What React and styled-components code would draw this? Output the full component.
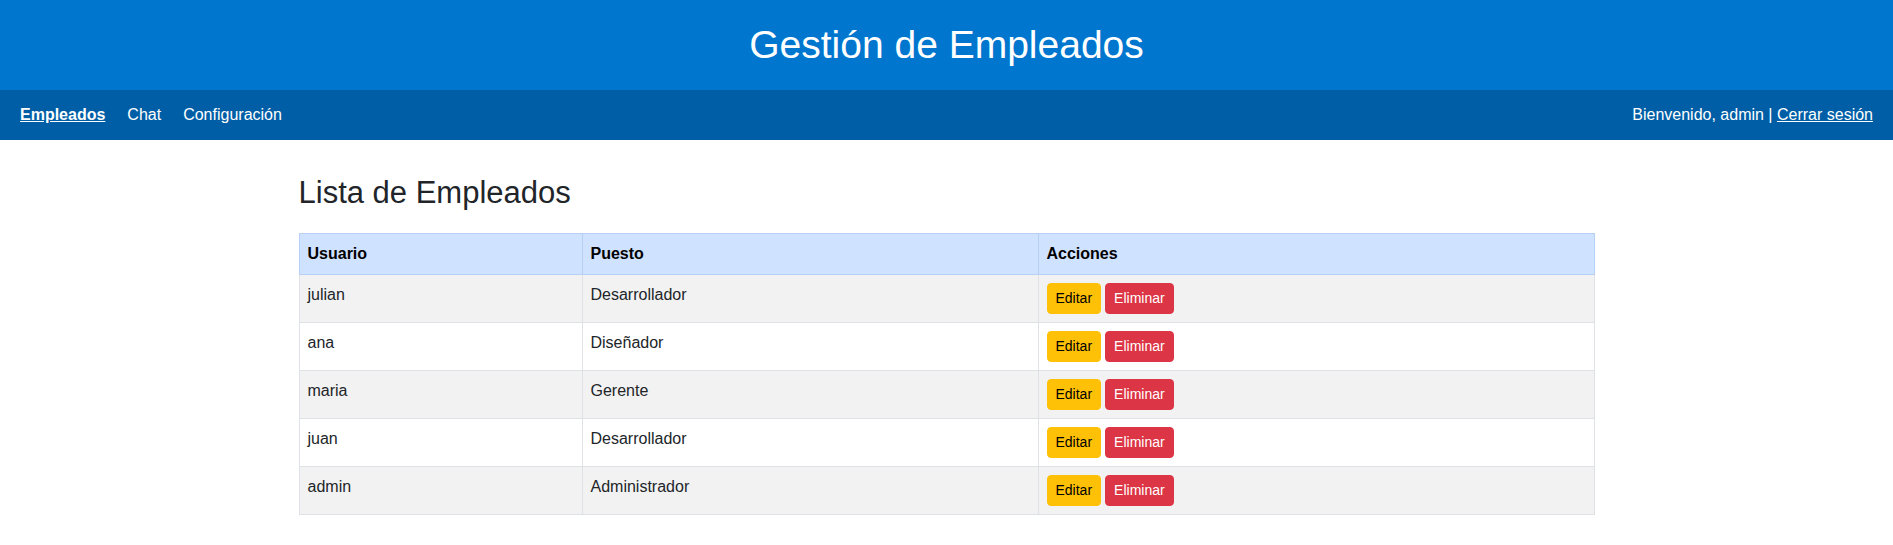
import React from "react";
import styled, { createGlobalStyle } from "styled-components";

const GlobalStyle = createGlobalStyle`
  html, body {
    margin: 0;
    padding: 0;
    background: #ffffff;
  }
  body {
    font-family: "Liberation Sans", Arial, sans-serif;
    font-size: 16px;
    color: #212529;
  }
`;

const Header = styled.header`
  background: #0076cf;
  color: #ffffff;
  height: 90px;
  display: flex;
  align-items: center;
  justify-content: center;
`;

const Title = styled.h1`
  margin: 0;
  font-size: 39px;
  font-weight: 400;
  line-height: 50px;
`;

const NavBar = styled.nav`
  background: #005ea6;
  height: 50px;
  display: flex;
  align-items: center;
  justify-content: space-between;
  padding: 0 20px;
  color: #ffffff;
`;

const NavLinks = styled.div`
  display: flex;
  gap: 22px;
`;

const NavLink = styled.a`
  color: #ffffff;
  text-decoration: ${(p) => (p.$active ? "underline" : "none")};
  font-weight: ${(p) => (p.$active ? 700 : 400)};
  cursor: pointer;
`;

const UserInfo = styled.div`
  color: #ffffff;
`;

const Logout = styled.a`
  color: #ffffff;
  text-decoration: underline;
  cursor: pointer;
`;

const Main = styled.main`
  width: 1296px;
  margin: 0 auto;
  padding-top: 35px;
`;

const PageTitle = styled.h2`
  margin: 0 0 22px;
  font-size: 31px;
  font-weight: 400;
  color: #212529;
`;

const Table = styled.table`
  width: 100%;
  border-collapse: collapse;
  table-layout: fixed;
  line-height: 1.5;
`;

const Col = styled.col`
  width: ${(p) => p.$w || "auto"};
`;

const HeadCell = styled.th`
  background: #cfe2ff;
  border: 1px solid #b6cff2;
  padding: 8px;
  text-align: left;
  font-weight: 700;
  color: #000000;
`;

const Row = styled.tr`
  background: ${(p) => (p.$striped ? "#f2f2f2" : "#ffffff")};
`;

const Cell = styled.td`
  border: 1px solid #dee2e6;
  padding: 8px;
  color: #212529;
  vertical-align: top;
`;

const Actions = styled.div`
  display: flex;
  gap: 4px;
`;

const Button = styled.button`
  font-family: "Liberation Sans", Arial, sans-serif;
  font-size: 14px;
  line-height: 1.5;
  padding: 4px 8px;
  border-radius: 4px;
  border: 1px solid ${(p) => (p.$variant === "danger" ? "#dc3545" : "#ffc107")};
  background: ${(p) => (p.$variant === "danger" ? "#dc3545" : "#ffc107")};
  color: ${(p) => (p.$variant === "danger" ? "#ffffff" : "#000000")};
  cursor: pointer;
`;

const employees = [
  { user: "julian", role: "Desarrollador" },
  { user: "ana", role: "Diseñador" },
  { user: "maria", role: "Gerente" },
  { user: "juan", role: "Desarrollador" },
  { user: "admin", role: "Administrador" },
];

export default function App() {
  return (
    <>
      <GlobalStyle />
      <Header>
        <Title>Gestión de Empleados</Title>
      </Header>
      <NavBar>
        <NavLinks>
          <NavLink $active>Empleados</NavLink>
          <NavLink>Chat</NavLink>
          <NavLink>Configuración</NavLink>
        </NavLinks>
        <UserInfo>
          Bienvenido, admin | <Logout>Cerrar sesión</Logout>
        </UserInfo>
      </NavBar>
      <Main>
        <PageTitle>Lista de Empleados</PageTitle>
        <Table>
          <colgroup>
            <Col $w="283px" />
            <Col $w="456px" />
            <Col />
          </colgroup>
          <thead>
            <tr>
              <HeadCell>Usuario</HeadCell>
              <HeadCell>Puesto</HeadCell>
              <HeadCell>Acciones</HeadCell>
            </tr>
          </thead>
          <tbody>
            {employees.map((e, i) => (
              <Row key={e.user} $striped={i % 2 === 0}>
                <Cell>{e.user}</Cell>
                <Cell>{e.role}</Cell>
                <Cell>
                  <Actions>
                    <Button>Editar</Button>
                    <Button $variant="danger">Eliminar</Button>
                  </Actions>
                </Cell>
              </Row>
            ))}
          </tbody>
        </Table>
      </Main>
    </>
  );
}
